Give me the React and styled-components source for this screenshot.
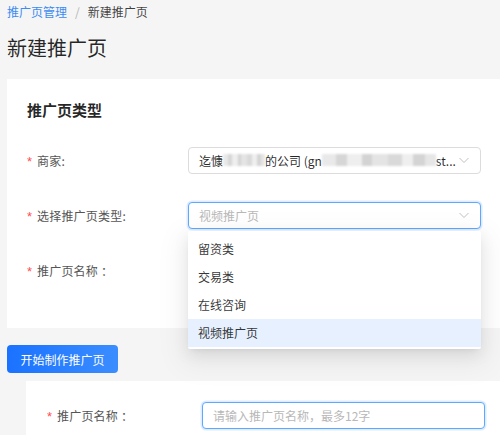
import React from "react";
import styled, { createGlobalStyle } from "styled-components";

const Global = createGlobalStyle`
  html, body { margin: 0; padding: 0; background: #f5f5f5; overflow: hidden; }
  body { font-family: "Noto Sans CJK SC", "Noto Sans", sans-serif; color: rgba(0,0,0,0.85); }
  * { box-sizing: border-box; }
`;

const Page = styled.div`
  width: 500px;
  height: 435px;
  padding-left: 7px;
  overflow: hidden;
`;

const Breadcrumb = styled.div`
  display: flex;
  align-items: center;
  height: 24px;
  font-size: 12px;
  line-height: 24px;
  color: rgba(0,0,0,0.75);
`;

const Crumb = styled.span`
  color: ${(p) => (p.$link ? "#3c8cf2" : "rgba(0,0,0,0.75)")};
`;

const Sep = styled.span`
  margin: 0 8px;
  color: #b5b5b5;
`;

const Title = styled.h1`
  margin: 10px 0 17px;
  font-size: 20px;
  line-height: 28px;
  font-weight: 400;
  color: rgba(0,0,0,0.85);
`;

const Card = styled.div`
  background: #fff;
  width: ${(p) => p.$width}px;
  margin-left: ${(p) => p.$indent || 0}px;
  padding: ${(p) => p.$pad};
`;

const CardTitle = styled.div`
  font-size: 15px;
  line-height: 22px;
  font-weight: 700;
  color: rgba(0,0,0,0.85);
  margin-bottom: 25px;
`;

const Row = styled.div`
  display: flex;
  align-items: center;
  height: 28px;
  margin-bottom: ${(p) => p.$mb || 0}px;
`;

const Label = styled.div`
  width: ${(p) => p.$w}px;
  flex: none;
  display: flex;
  align-items: center;
  font-size: 12px;
  color: #555;
  letter-spacing: 0.2px;
  white-space: pre;
`;

const Star = styled.span`
  color: #ff4d4f;
  font-family: "Liberation Sans", sans-serif;
  font-size: 13px;
  width: 10px;
  margin-top: 2px;
`;

const Field = styled.div`
  position: relative;
  width: ${(p) => p.$w}px;
  flex: none;
`;

const Box = styled.div`
  height: ${(p) => p.$h || 27}px;
  border: 1px solid ${(p) => (p.$focus ? "#5fa8ff" : "#dcdcdc")};
  box-shadow: ${(p) => (p.$focus ? "0 0 0 1.5px rgba(64,150,255,0.18)" : "none")};
  border-radius: 4px;
  background: #fff;
  display: flex;
  align-items: center;
  padding: 0 10px;
  font-size: 12px;
  white-space: nowrap;
  overflow: hidden;
`;

const Value = styled.span`
  flex: 1;
  display: flex;
  align-items: center;
  color: rgba(0,0,0,0.85);
  overflow: hidden;
`;

const Placeholder = styled.span`
  flex: 1;
  color: #b8b8b8;
`;

const Blur = styled.span`
  display: inline-block;
  width: ${(p) => p.$w}px;
  height: 12px;
  background:
    linear-gradient(90deg,
      #e9e9e9 0 12%, #d6d6d6 12% 22%, #eeeeee 22% 35%, #d3d3d3 35% 44%,
      #e4e4e4 44% 58%, #d9d9d9 58% 70%, #efefef 70% 80%, #d4d4d4 80% 90%, #e6e6e6 90% 100%);
  filter: blur(1.2px);
`;

const Chevron = () => (
  <svg width="12" height="12" viewBox="0 0 12 12" style={{ flex: "none" }}>
    <polyline points="1.5,4 6,8.5 10.5,4" fill="none" stroke="#c2c2c2" strokeWidth="1" />
  </svg>
);

const Menu = styled.div`
  position: absolute;
  left: 0;
  right: 0;
  top: 29px;
  background: #fff;
  border-radius: 2px;
  padding: 4px 0 2px;
  box-shadow: 0 3px 6px -4px rgba(0,0,0,0.12), 0 6px 16px 0 rgba(0,0,0,0.08), 0 9px 28px 8px rgba(0,0,0,0.05);
  z-index: 10;
`;

const Item = styled.div`
  height: 28px;
  line-height: 28px;
  padding: 0 10px;
  font-size: 12px;
  color: rgba(0,0,0,0.8);
  background: ${(p) => (p.$active ? "#e6f0fe" : "#fff")};
`;

const Button = styled.button`
  margin: 17px 0 8px;
  height: 28px;
  width: 111px;
  border: none;
  border-radius: 4px;
  background: linear-gradient(90deg, #1a72ff, #3b8dff);
  color: #fff;
  font-family: inherit;
  font-size: 12px;
  padding: 0;
  display: block;
`;

export default function App() {
  return (
    <Page>
      <Global />
      <Breadcrumb>
        <Crumb $link>推广页管理</Crumb>
        <Sep>/</Sep>
        <Crumb>新建推广页</Crumb>
      </Breadcrumb>
      <Title>新建推广页</Title>
      <Card $width={520} $pad="20px 0 44px 20px">
        <CardTitle>推广页类型</CardTitle>
        <Row $mb={27}>
          <Label $w={161}><Star>*</Star>商家:</Label>
          <Field $w={293}>
            <Box>
              <Value>
                迄慷<Blur $w={42} />的公司 (gn<Blur $w={114} />st...
              </Value>
              <Chevron />
            </Box>
          </Field>
        </Row>
        <Row $mb={27}>
          <Label $w={161}><Star>*</Star>选择推广页类型:</Label>
          <Field $w={293}>
            <Box $focus>
              <Placeholder>视频推广页</Placeholder>
              <Chevron />
            </Box>
            <Menu>
              <Item>留资类</Item>
              <Item>交易类</Item>
              <Item>在线咨询</Item>
              <Item $active>视频推广页</Item>
            </Menu>
          </Field>
        </Row>
        <Row>
          <Label $w={161}><Star>*</Star>推广页名称 ：</Label>
          <Field $w={292}>
            <Box />
          </Field>
        </Row>
      </Card>
      <Button>开始制作推广页</Button>
      <Card $width={500} $indent={19} $pad="20px 0 20px 21px">
        <Row>
          <Label $w={155}><Star>*</Star>推广页名称 ：</Label>
          <Field $w={283}>
            <Box $focus>
              <Placeholder>请输入推广页名称，最多12字</Placeholder>
            </Box>
          </Field>
        </Row>
      </Card>
    </Page>
  );
}
